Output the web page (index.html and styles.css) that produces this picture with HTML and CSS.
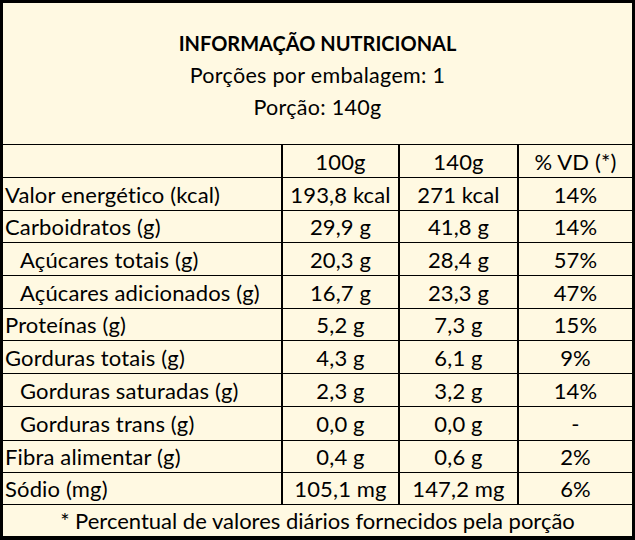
FILE: index.html
```html
<!DOCTYPE html>
<html lang="pt">
<head>
<meta charset="utf-8">
<title>Informação Nutricional</title>
<link rel="stylesheet" href="styles.css">
</head>
<body>
<div class="label">
  <div class="title">
    <div class="t-main">INFORMAÇÃO NUTRICIONAL</div>
    <div class="t-sub">Porções por embalagem: 1</div>
    <div class="t-sub">Porção: 140g</div>
  </div>
  <div class="grid">
    <div class="c name"></div><div class="c">100g</div><div class="c">140g</div><div class="c">% VD (*)</div>
    <div class="c name">Valor energético (kcal)</div><div class="c">193,8 kcal</div><div class="c">271 kcal</div><div class="c">14%</div>
    <div class="c name">Carboidratos (g)</div><div class="c">29,9 g</div><div class="c">41,8 g</div><div class="c">14%</div>
    <div class="c name sub">Açúcares totais (g)</div><div class="c">20,3 g</div><div class="c">28,4 g</div><div class="c">57%</div>
    <div class="c name sub">Açúcares adicionados (g)</div><div class="c">16,7 g</div><div class="c">23,3 g</div><div class="c">47%</div>
    <div class="c name">Proteínas (g)</div><div class="c">5,2 g</div><div class="c">7,3 g</div><div class="c">15%</div>
    <div class="c name">Gorduras totais (g)</div><div class="c">4,3 g</div><div class="c">6,1 g</div><div class="c">9%</div>
    <div class="c name sub">Gorduras saturadas (g)</div><div class="c">2,3 g</div><div class="c">3,2 g</div><div class="c">14%</div>
    <div class="c name sub">Gorduras trans (g)</div><div class="c">0,0 g</div><div class="c">0,0 g</div><div class="c">-</div>
    <div class="c name">Fibra alimentar (g)</div><div class="c">0,4 g</div><div class="c">0,6 g</div><div class="c">2%</div>
    <div class="c name">Sódio (mg)</div><div class="c">105,1 mg</div><div class="c">147,2 mg</div><div class="c">6%</div>
    <div class="c foot">* Percentual de valores diários fornecidos pela porção</div>
  </div>
</div>
</body>
</html>
```
FILE: styles.css
```css
html, body {
  margin: 0;
  padding: 0;
  background: #ffffff;
}
.label {
  width: 635px;
  height: 540px;
  box-sizing: border-box;
  border: 3px solid #000;
  background: #fff9e2;
  font-family: Lato, "Open Sans", sans-serif;
  color: #000;
  display: flex;
  flex-direction: column;
}
.title {
  height: 142px;
  box-sizing: border-box;
  padding-top: 24px;
  border-bottom: 1px solid #000;
  text-align: center;
  line-height: 32px;
}
.t-main {
  font-weight: 700;
  font-size: 20px;
}
.t-sub {
  font-size: 21.5px;
  letter-spacing: 0.3px;
}
.grid {
  flex: 1;
  display: grid;
  grid-template-columns: 278px 115px 117px 113px;
  grid-template-rows: 32px 32px 31px 32px 32px 31px 32px 32px 33px 31px 31px 31px;
  column-gap: 2px;
  row-gap: 1px;
  background: #000;
}
.c {
  background: #fff9e2;
  display: flex;
  align-items: center;
  justify-content: center;
  font-size: 22px;
  letter-spacing: 0.15px;
  white-space: nowrap;
}
.name {
  justify-content: flex-start;
  padding-left: 2px;
}
.sub {
  padding-left: 17px;
}
.foot {
  grid-column: 1 / -1;
  letter-spacing: 0;
}
```
